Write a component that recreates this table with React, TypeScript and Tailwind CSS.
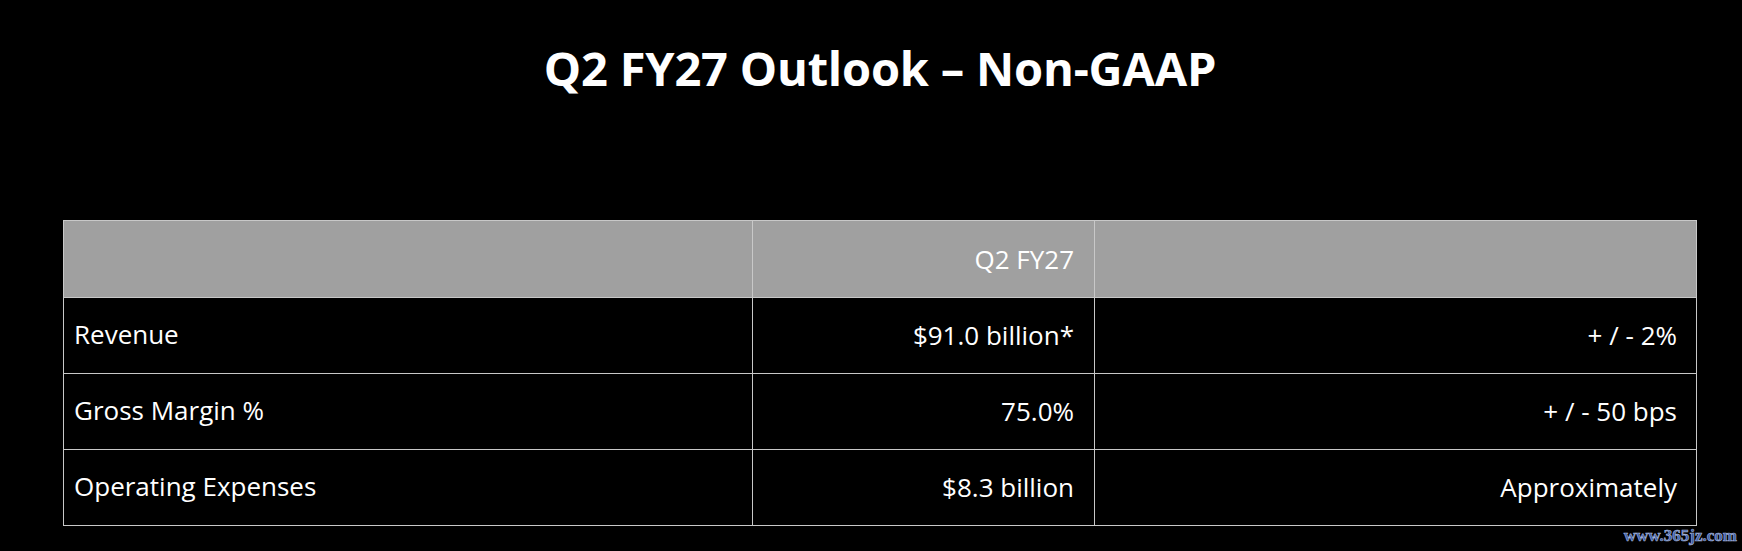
import React from "react";

const rows = [
  { label: "Revenue", value: "$91.0 billion*", note: "+ / - 2%" },
  { label: "Gross Margin %", value: "75.0%", note: "+ / - 50 bps" },
  { label: "Operating Expenses", value: "$8.3 billion", note: "Approximately" },
];

export default function App() {
  return (
    <div
      className="relative h-[551px] w-[1742px] overflow-hidden bg-black text-white"
      style={{ fontFamily: '"Open Sans", "Noto Sans", sans-serif' }}
    >
      <h1 className="pt-[40px] pl-[18px] text-center text-[47px] font-bold leading-[56px] tracking-[-0.2px]">
        Q2 FY27 Outlook – Non-GAAP
      </h1>
      <div className="ml-[63px] mt-[124px] w-[1634px] border border-[#c8c8c8]">
        <div className="grid h-[76px] grid-cols-[689px_342px_1fr] bg-[#a0a0a0]">
          <div className="border-r border-[#c8c8c8]" />
          <div className="flex items-center justify-end border-r border-[#c8c8c8] pr-[20px] text-[26px]">
            Q2 FY27
          </div>
          <div />
        </div>
        {rows.map((r) => (
          <div
            key={r.label}
            className="grid h-[76px] grid-cols-[689px_342px_1fr] border-t border-[#c8c8c8] text-[26px]"
          >
            <div className="flex items-center border-r border-[#c8c8c8] pb-[3px] pl-[10px]">
              {r.label}
            </div>
            <div className="flex items-center justify-end border-r border-[#c8c8c8] pr-[20px]">
              {r.value}
            </div>
            <div className="flex items-center justify-end pr-[19px]">{r.note}</div>
          </div>
        ))}
      </div>
      <div
        className="absolute right-[5px] top-[526px] text-[17px] font-bold leading-[20px] text-[#3d5ea8] [-webkit-text-stroke:0.6px_#aab8dc]"
        style={{ fontFamily: '"Liberation Serif", serif' }}
      >
        www.365jz.com
      </div>
    </div>
  );
}
